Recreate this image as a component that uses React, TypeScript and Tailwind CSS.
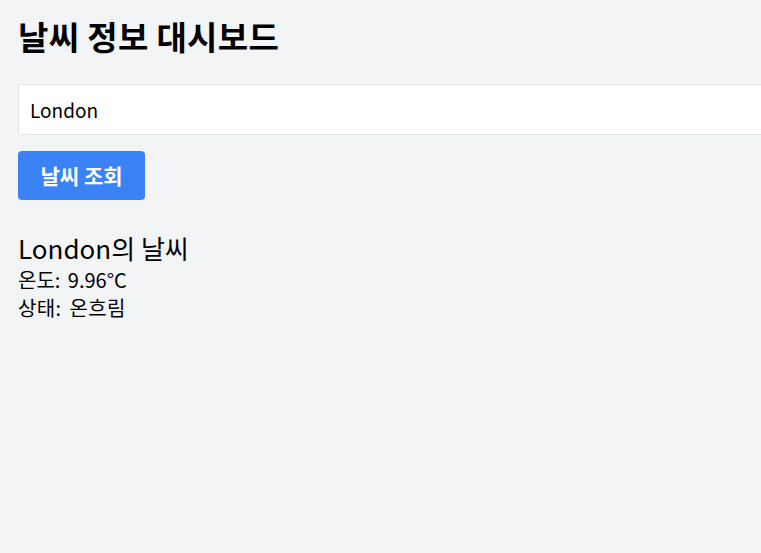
import React, { useState } from "react";

export default function App() {
  const [city, setCity] = useState("London");

  return (
    <main className="min-h-screen w-full overflow-hidden bg-[#f3f4f6] p-[18px] text-black [font-family:'Noto_Sans_CJK_KR','Noto_Sans',sans-serif]">
      <h1 className="text-[33px] font-bold leading-[36px] tracking-[0.01em] text-black">날씨 정보 대시보드</h1>

      <div className="mt-[30px] w-[780px]">
        <input
          value={city}
          onChange={(e) => setCity(e.target.value)}
          className="block h-[51px] w-full border border-[#e5e7eb] bg-white px-[11px] text-[19px] text-black outline-none"
        />
      </div>

      <button className="mt-4 h-[49px] w-[127px] rounded-[4px] bg-[#3b82f6] text-[21px] font-bold text-white">
        날씨 조회
      </button>

      <section className="mt-[30px]">
        <h2 className="text-[26px] leading-[36px]">London의 날씨</h2>
        <p className="text-[20px] leading-[28px] [word-spacing:3px]">온도: 9.96°C</p>
        <p className="text-[20px] leading-[28px] tracking-[0.02em] [word-spacing:3px]">상태: 온흐림</p>
      </section>
    </main>
  );
}
